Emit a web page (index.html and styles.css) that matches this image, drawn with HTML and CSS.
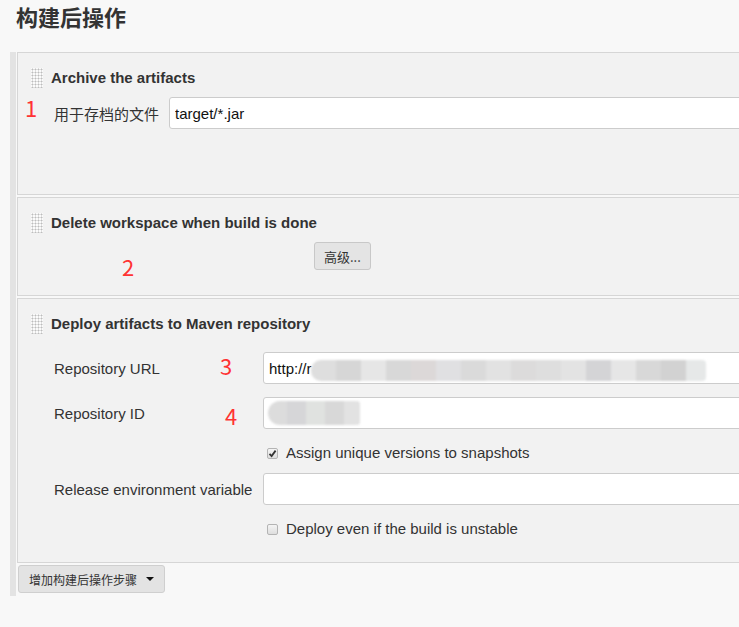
FILE: index.html
```html
<!DOCTYPE html>
<html lang="zh-CN">
<head>
  <meta charset="UTF-8">
  <title>构建后操作</title>
  <link rel="stylesheet" href="styles.css">
</head>
<body>
<h1 class="title">构建后操作</h1>

<div class="steps">
  <div class="step step-archive">
    <div class="step-head"><span class="handle"></span>Archive the artifacts</div>
    <div class="row row-archive">
      <label class="label">用于存档的文件</label>
      <div class="field"><input class="text" type="text" value="target/*.jar"></div>
    </div>
  </div>

  <div class="step step-delete">
    <div class="step-head"><span class="handle"></span>Delete workspace when build is done</div>
    <div class="adv-row">
      <button class="btn">高级...</button>
    </div>
  </div>

  <div class="step step-deploy">
    <div class="step-head"><span class="handle"></span>Deploy artifacts to Maven repository</div>
    <div class="row row-url">
      <label class="label label-wide">Repository URL</label>
      <div class="field">
        <input class="text" type="text" value="http://r">
        <div class="mosaic mosaic-url">
          <span style="background:#dedede"></span><span style="background:#d6d6d6"></span><span style="background:#e6e6e6"></span><span style="background:#d8d8d8"></span><span style="background:#dcd8d8"></span><span style="background:#e0e0e2"></span><span style="background:#dadada"></span><span style="background:#e2e2e2"></span><span style="background:#dcdbdb"></span><span style="background:#dedede"></span><span style="background:#e3e3e3"></span><span style="background:#d4d4d6"></span><span style="background:#e6e6e6"></span><span style="background:#d8d8d8"></span><span style="background:#d2d2d2"></span><span style="background:#e6e8e8"></span>
        </div>
      </div>
    </div>
    <div class="row row-id">
      <label class="label label-wide">Repository ID</label>
      <div class="field">
        <input class="text" type="text" value="">
        <div class="mosaic mosaic-id">
          <span style="background:#dcdcdc"></span><span style="background:#d6d6d8"></span><span style="background:#e0e2e0"></span><span style="background:#d8d8d8"></span><span style="background:#e2e2e2"></span>
        </div>
      </div>
    </div>
    <div class="check-row check-first">
      <span class="box checked">
        <svg width="9" height="9" viewBox="0 0 9 9"><path d="M1.5 4.8 L3.6 7 L7.6 1.6" fill="none" stroke="#333" stroke-width="1.8"/></svg>
      </span>
      Assign unique versions to snapshots
    </div>
    <div class="row row-env">
      <label class="label label-wide">Release environment variable</label>
      <div class="field"><input class="text" type="text" value=""></div>
    </div>
    <div class="check-row check-last">
      <span class="box"></span>
      Deploy even if the build is unstable
    </div>
  </div>

  <div class="add-row">
    <button class="btn btn-add">增加构建后操作步骤 <span class="caret"></span></button>
  </div>
</div>

<span class="mark mark-1">1</span>
<span class="mark mark-2">2</span>
<span class="mark mark-3">3</span>
<span class="mark mark-4">4</span>
</body>
</html>
```

FILE: styles.css
```css
*{
  margin: 0;
  padding: 0;
  box-sizing: border-box;
}
html, body{
  overflow: hidden;
}
body{
  position: relative;
  width: 739px;
  height: 627px;
  background: #f8f8f8;
  color: #333;
  font-family: "Liberation Sans", Arial, "Noto Sans CJK SC", sans-serif;
  font-size: 15px;
}
.title{
  padding: 3px 0 0 16px;
  height: 28px;
  font-size: 22px;
  line-height: 26px;
  font-weight: bold;
  font-family: "Noto Sans CJK SC", sans-serif;
  color: #333;
}
.steps{
  margin: 24px 0 0 10px;
  border-left: 6px solid #e3e3e3;
  padding: 0 0 3px 1px;
}
.step{
  background: #f2f2f2;
  border: 1px solid #d6d6d6;
  border-right: none;
  margin-bottom: 2px;
  padding: 14px 0 0 13px;
  overflow: hidden;
}
.step-head{
  display: flex;
  align-items: center;
  height: 21px;
  font-weight: bold;
  font-size: 15px;
  color: #333;
}
.handle{
  width: 12px;
  height: 20px;
  margin-right: 8px;
  background-color: #fbfbfb;
  background-image: radial-gradient(circle, #bdbdbd 0.9px, transparent 1.1px);
  background-size: 3px 3px;
}
.row{
  display: flex;
  align-items: center;
  padding-left: 23px;
}
.label{
  flex: none;
  padding-right: 10px;
  color: #333;
  font-family: "Liberation Sans", Arial, "Noto Sans CJK SC", sans-serif;
}
.label-wide{
  width: 209px;
}
.field{
  position: relative;
  flex: 1;
  height: 32px;
}
.text{
  width: calc(100% + 10px);
  height: 32px;
  border: 1px solid #ccc;
  border-radius: 3px;
  background: #fff;
  padding: 0 5px;
  font-family: "Liberation Sans", Arial, sans-serif;
  font-size: 15px;
  color: #111;
  outline: none;
}
.step-archive{
  padding-bottom: 65px;
}
.row-archive{
  margin-top: 9px;
}
.step-delete{
  padding-bottom: 25px;
}
.adv-row{
  margin: 9px 0 0 283px;
}
.btn{
  height: 28px;
  padding: 0 9px;
  border: 1px solid #c8c8c8;
  border-radius: 3px;
  background: #e4e4e4;
  color: #333;
  font-family: "Noto Sans CJK SC", sans-serif;
  font-size: 13px;
}
.step-deploy{
  padding-bottom: 23px;
}
.row-url{
  margin-top: 18px;
}
.row-id{
  margin-top: 13px;
}
.row-env{
  margin-top: 10px;
}
.check-row{
  display: flex;
  align-items: center;
  height: 22px;
  padding-left: 236px;
  color: #333;
}
.check-first{
  margin-top: 12px;
}
.check-last{
  margin-top: 12px;
}
.box{
  display: flex;
  align-items: center;
  justify-content: center;
  width: 11px;
  height: 11px;
  margin: 3px 8px 0 0;
  border: 1px solid #b4b4b4;
  border-radius: 2px;
  background: linear-gradient(#f4f4f4, #dedede);
}
.mosaic{
  position: absolute;
  display: flex;
  filter: blur(1.2px);
  overflow: hidden;
}
.mosaic span{
  flex: none;
  width: 25px;
  height: 100%;
}
.mosaic-url{
  left: 48px;
  top: 8px;
  width: 395px;
  height: 21px;
  border-radius: 10px 4px 4px 10px;
}
.mosaic-id{
  left: 5px;
  top: 4px;
  width: 92px;
  height: 24px;
  border-radius: 12px 3px 3px 12px;
}
.mosaic-id span{
  width: 19px;
}
.add-row{
  padding-left: 1px;
}
.btn-add{
  display: flex;
  align-items: center;
  height: 28px;
  padding: 0 10px;
  border-color: #cfcfcf;
  background: #e3e3e3;
  font-size: 12px;
}
.caret{
  display: inline-block;
  margin-left: 9px;
  border-left: 4px solid transparent;
  border-right: 4px solid transparent;
  border-top: 4px solid #111;
}
.mark{
  position: absolute;
  color: #ff3333;
  font-size: 22px;
  line-height: 22px;
  font-family: "Noto Sans CJK SC", sans-serif;
}
.mark-1{ left: 25px; top: 96px; }
.mark-2{ left: 122px; top: 255px; }
.mark-3{ left: 220px; top: 354px; }
.mark-4{ left: 225px; top: 404px; }
```
